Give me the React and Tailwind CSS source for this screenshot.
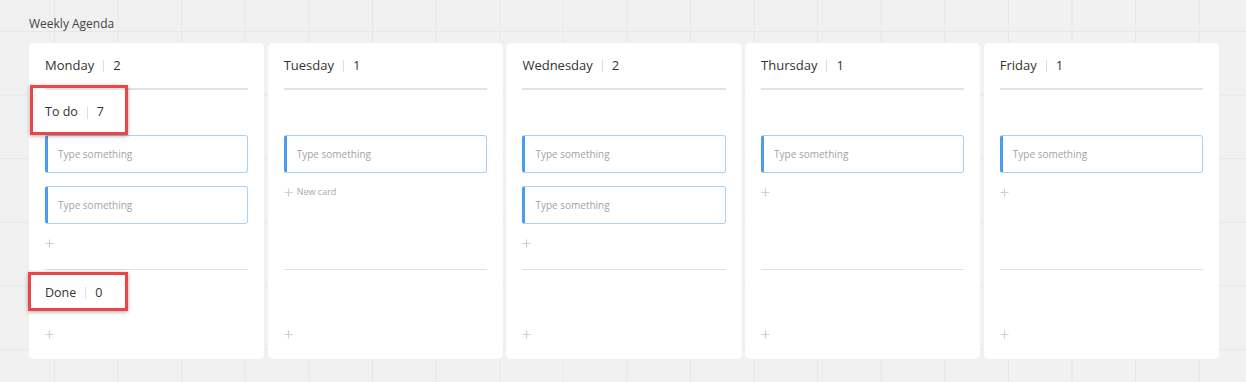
import React from 'react'

// ─── Data ──────────────────────────────────────────────────────────────────────
const DAYS = [
  { name: 'Monday', count: 2, cards: 2, labels: true },
  { name: 'Tuesday', count: 1, cards: 1, newCard: true },
  { name: 'Wednesday', count: 2, cards: 2 },
  { name: 'Thursday', count: 1, cards: 1 },
  { name: 'Friday', count: 1, cards: 1 },
]

// ─── Small pieces ──────────────────────────────────────────────────────────────
function Plus() {
  return (
    <svg width="9" height="9" viewBox="0 0 9 9" className="shrink-0">
      <path d="M4.5 0.5v8M0.5 4.5h8" stroke="#cfcfcf" strokeWidth="1.2" />
    </svg>
  )
}

function Count({ label, count, big }) {
  return (
    <div className={`flex items-center text-[#333] ${big ? 'text-[13px]' : 'text-[12.5px]'}`}>
      <span>{label}</span>
      <span className="mx-[9px] h-[12px] w-px bg-[#dedede]" />
      <span>{count}</span>
    </div>
  )
}

function Note() {
  return (
    <div className="flex h-[38px] items-center rounded-[3px] border border-[#a9d0f5] border-l-[3px] border-l-[#4a9cf0] pl-[10px] text-[10px] text-[#a3a3a3]">
      Type something
    </div>
  )
}

function Callout({ className }) {
  return (
    <div className={`pointer-events-none absolute border-[3px] border-[#ea4547] shadow-[0_1px_4px_rgba(0,0,0,0.35)] ${className}`} />
  )
}

// ─── Column ────────────────────────────────────────────────────────────────────
function DayColumn({ day }) {
  return (
    <div className="flex h-[316px] flex-col rounded-[5px] bg-white px-4">
      <div className="flex h-[45px] shrink-0 items-center">
        <Count label={day.name} count={day.count} big />
      </div>
      <div className="h-[2px] shrink-0 bg-[#e2e2e2]" />

      {/* To do */}
      <div className="flex h-[179px] shrink-0 flex-col">
        <div className="relative flex h-[45px] shrink-0 items-center">
          {day.labels && (
            <>
              <Count label="To do" count={7} />
              <Callout className="-left-[15px] -top-[5px] h-[50px] w-[98px]" />
            </>
          )}
        </div>
        <div className="flex flex-col gap-[13px]">
          {Array.from({ length: day.cards }).map((_, i) => <Note key={i} />)}
        </div>
        <div className="mt-[12px] flex h-[14px] items-center gap-[4px]">
          <Plus />
          {day.newCard && <span className="text-[9px] text-[#aaa]">New card</span>}
        </div>
      </div>
      <div className="h-px shrink-0 bg-[#e0e0e0]" />

      {/* Done */}
      <div className="relative flex h-[46px] shrink-0 items-center">
        {day.labels && (
          <>
            <Count label="Done" count={0} />
            <Callout className="-left-[17px] top-[2px] h-[39px] w-[100px]" />
          </>
        )}
      </div>
      <div className="mt-[11px] flex h-[14px] items-center">
        <Plus />
      </div>
    </div>
  )
}

// ─── Page ──────────────────────────────────────────────────────────────────────
export default function App() {
  return (
    <div
      className="min-h-[382px] w-full bg-[#f1f1f1] px-[29px] pt-[15px] font-['Open_Sans',sans-serif] [background-image:linear-gradient(to_right,#e7e7e7_1px,transparent_1px),linear-gradient(to_bottom,#e7e7e7_1px,transparent_1px)] [background-position:54px_31px] [background-size:63.6px_63.6px]"
    >
      <div className="mb-[10px] h-[18px] text-[12px] leading-[18px] text-[#444]">Weekly Agenda</div>
      <div className="grid w-[1190px] grid-cols-5 gap-[3.5px]">
        {DAYS.map(d => <DayColumn key={d.name} day={d} />)}
      </div>
    </div>
  )
}
